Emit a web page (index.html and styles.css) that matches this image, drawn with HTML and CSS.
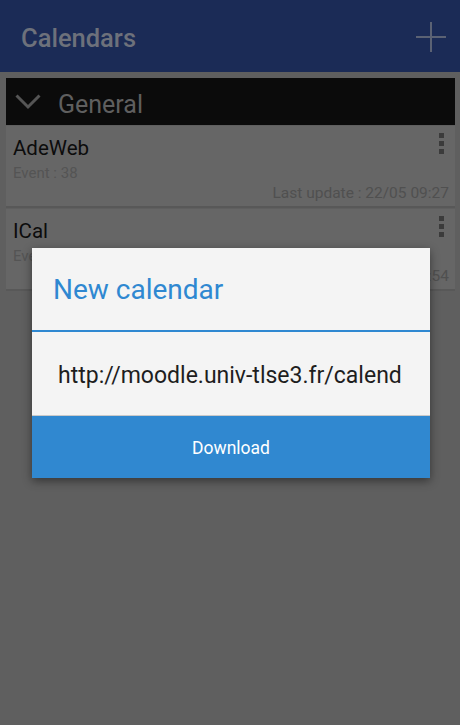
FILE: index.html
```html
<!DOCTYPE html>
<html>
<head>
<meta charset="utf-8">
<link rel="stylesheet" href="styles.css">
</head>
<body>
<div class="app">
  <header class="toolbar">
    <h1 class="toolbar-title">Calendars</h1>
    <svg class="add-icon" width="30" height="30" viewBox="0 0 30 30"><path d="M15 0V30M0 15H30" stroke="#5b6274" stroke-width="2"/></svg>
  </header>
  <main class="content">
    <div class="group">
      <svg class="chevron" width="26" height="16" viewBox="0 0 26 16"><path d="M1.5 1.5L13 13L24.5 1.5" fill="none" stroke="#555" stroke-width="3"/></svg>
      <span class="group-name">General</span>
    </div>
    <div class="card">
      <div class="card-main">
        <div class="card-name">AdeWeb</div>
        <div class="card-count">Event : 38</div>
      </div>
      <div class="dots"><i></i><i></i><i></i></div>
      <div class="card-update">Last update : 22/05 09:27</div>
    </div>
    <div class="card">
      <div class="card-main">
        <div class="card-name">ICal</div>
        <div class="card-count">Event : 12</div>
      </div>
      <div class="dots"><i></i><i></i><i></i></div>
      <div class="card-update">Last update : 22/05 09:54</div>
    </div>
  </main>
  <div class="dialog">
    <div class="dialog-title">New calendar</div>
    <div class="dialog-body"><span class="url">http://moodle.univ-tlse3.fr/calendar/export_execute.php</span></div>
    <div class="dialog-button">Download</div>
  </div>
</div>
</body>
</html>
```
FILE: styles.css
```css
html, body {
  margin: 0;
  padding: 0;
}
body {
  background: #5f5f5f;
  font-family: Roboto, "Noto Sans", sans-serif;
}
.app {
  position: relative;
  width: 460px;
  height: 725px;
  overflow: hidden;
  background: #5f5f5f;
}
.toolbar {
  height: 72px;
  background: #1b2b56;
  display: flex;
  align-items: center;
  justify-content: space-between;
  padding: 0 14px 0 21px;
  box-sizing: border-box;
}
.toolbar-title {
  margin: 4px 0 0 0;
  font-size: 25.5px;
  font-weight: 500;
  color: #6d717b;
}
.add-icon {
  display: block;
  margin-top: 1px;
}
.content {
  padding: 6px 5px 0 6px;
}
.group {
  height: 47px;
  background: #0b0b0b;
  display: flex;
  align-items: center;
  padding-left: 9px;
  box-sizing: border-box;
}
.chevron {
  display: block;
  margin-top: 1px;
}
.group-name {
  margin-left: 17px;
  font-size: 25px;
  color: #5f5f5f;
  margin-top: 5px;
}
.card {
  position: relative;
  height: 82px;
  background: #666666;
  border-bottom: 2px solid #585858;
  margin-top: 1px;
  box-sizing: border-box;
}
.card-main {
  padding: 10px 0 0 7px;
}
.card-name {
  font-size: 20.5px;
  color: #0c0c0c;
  line-height: 24px;
}
.card-count {
  font-size: 15px;
  color: #545454;
  line-height: 18px;
  margin-top: 4px;
}
.card-update {
  position: absolute;
  right: 6px;
  bottom: 4px;
  font-size: 15.5px;
  color: #505050;
}
.dots {
  position: absolute;
  right: 11px;
  top: 7px;
  display: flex;
  flex-direction: column;
  gap: 3px;
}
.dots i {
  display: block;
  width: 5px;
  height: 5px;
  background: #3b3b3b;
}
.dialog {
  position: absolute;
  left: 32px;
  top: 248px;
  width: 398px;
  background: #f4f4f4;
  box-shadow: 0 3px 9px rgba(0,0,0,0.45);
}
.dialog-title {
  height: 84px;
  box-sizing: border-box;
  padding: 25px 0 0 21px;
  font-size: 28px;
  color: #2f88d1;
  border-bottom: 2px solid #2f88d1;
}
.dialog-body {
  height: 84px;
  box-sizing: border-box;
  border-bottom: 1px solid #c9c9c9;
  padding: 0 28px 0 26px;
  display: flex;
  align-items: center;
  overflow: hidden;
  white-space: nowrap;
}
.url {
  display: block;
  width: 344px;
  overflow: hidden;
  font-size: 23px;
  color: #1e1e1e;
  margin-top: 3px;
}
.dialog-button {
  height: 62px;
  background: #3088d0;
  color: #ffffff;
  font-size: 17.5px;
  display: flex;
  align-items: center;
  justify-content: center;
  padding-top: 1px;
  box-sizing: border-box;
}
```
